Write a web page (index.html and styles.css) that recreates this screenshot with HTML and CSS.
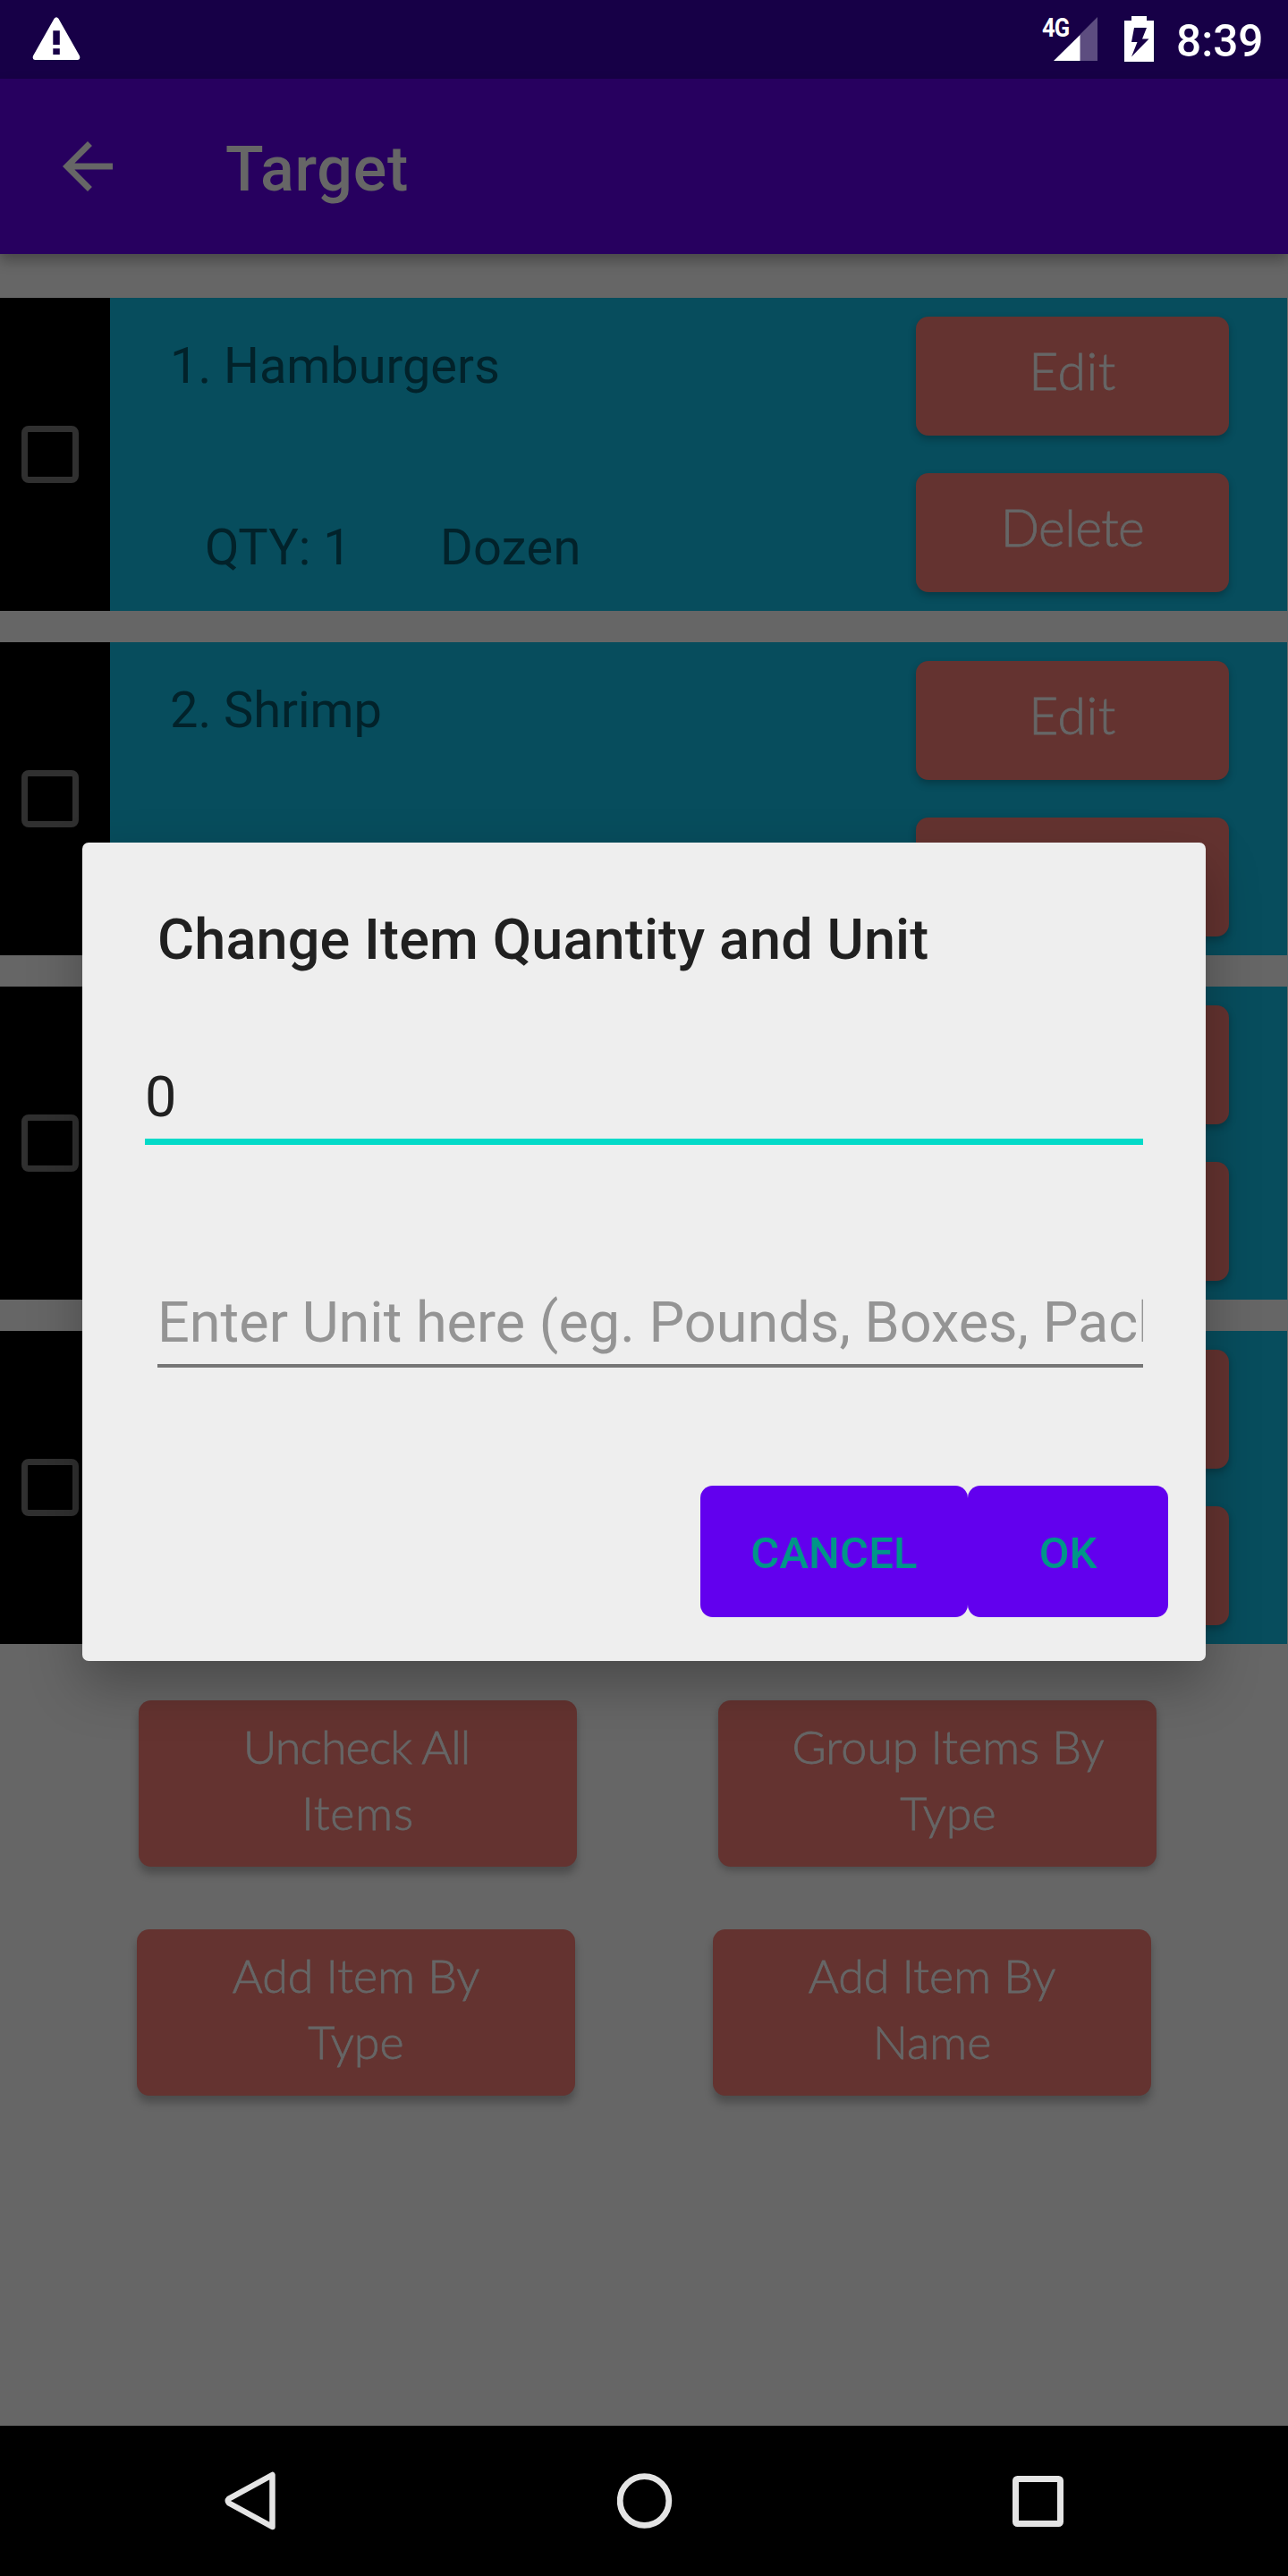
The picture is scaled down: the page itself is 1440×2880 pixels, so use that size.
FILE: index.html
```html
<!DOCTYPE html>
<html lang="en">
<head>
<meta charset="utf-8">
<title>Target</title>
<link rel="stylesheet" href="styles.css">
</head>
<body>
<div class="screen">
  <header class="status-bar">
    <svg class="warning" width="54" height="48" viewBox="0 0 54 48"><path fill="#fff" fill-rule="evenodd" d="M24.6 1.8Q27-1.2 29.4 1.8L53 43.5Q54.200 47.700 51 48H3Q-.2 47.700 1 43.500ZM23.300 15.300V31h7.500V15.300ZM23.300 35.300V42h7.500V35.300Z"/></svg>
    <div class="status-icons">
      <span class="network">4G</span>
      <svg class="signal" width="50" height="50" viewBox="0 0 50 50"><path fill="#5d4d80" d="M49 0V49H29V20Z"/><path fill="#fff" d="M0 49 29.500 20V49Z"/></svg>
      <svg class="battery" width="33" height="51" viewBox="0 0 33 51"><path fill="#fff" fill-rule="evenodd" d="M8 0H25V5H33V51H0V5H8ZM11 13 8 29H14.500L8 45.500 27.500 25.500H20L25 13Z"/></svg>
      <span class="clock">8:39</span>
    </div>
  </header>
  <div class="app-bar">
    <svg width="84" height="84" viewBox="0 0 24 24"><path fill="#666" d="M20 11H7.830l5.590-5.590L12 4l-8 8 8 8 1.410-1.410L7.830 13H20z"/></svg>
    <h1>Target</h1>
  </div>
  <main class="content">
    <section class="items">
      <article class="item">
        <div class="check-cell"><span class="checkbox"></span></div>
        <div class="details"><div class="name">1. Hamburgers</div><div class="amount"><span class="qty">QTY: 1</span><span class="measure">Dozen</span></div></div>
        <div class="actions"><div class="button small"><span class="edit">Edit</span></div><div class="button small"><span class="delete">Delete</span></div></div>
      </article>
      <article class="item">
        <div class="check-cell"><span class="checkbox"></span></div>
        <div class="details"><div class="name">2. Shrimp</div></div>
        <div class="actions"><div class="button small"><span class="edit">Edit</span></div><div class="button small"></div></div>
      </article>
      <article class="item">
        <div class="check-cell"><span class="checkbox"></span></div>
        <div class="details"></div>
        <div class="actions"><div class="button small"></div><div class="button small"></div></div>
      </article>
      <article class="item">
        <div class="check-cell"><span class="checkbox"></span></div>
        <div class="details"></div>
        <div class="actions"><div class="button small"></div><div class="button small"></div></div>
      </article>
    </section>
    <section class="list-actions">
      <div class="action-row upper">
        <div class="button large raised"><span class="uncheck">Uncheck All</span><span class="items-word">Items</span></div>
        <div class="button large group"><span>Group Items By</span><span>Type</span></div>
      </div>
      <div class="action-row lower">
        <div class="button large raised"><span>Add Item By</span><span>Type</span></div>
        <div class="button large raised"><span>Add Item By</span><span>Name</span></div>
      </div>
    </section>
  </main>
  <nav class="nav-bar">
    <svg width="58" height="68" viewBox="0 0 58 68"><path fill="none" stroke="#e4e4e4" stroke-width="6.500" stroke-linejoin="round" d="M53.500 5V63L5 36.500Q2.500 34 5 31.500Z"/></svg>
    <svg width="62" height="62" viewBox="0 0 62 62"><circle cx="30.500" cy="31" r="27.300" fill="none" stroke="#e4e4e4" stroke-width="6.800"/></svg>
    <svg width="57" height="57" viewBox="0 0 57 57"><rect x="3.500" y="3.500" width="50" height="50" rx="2" fill="none" stroke="#e4e4e4" stroke-width="7"/></svg>
  </nav>
  <div class="dialog">
    <h2>Change Item Quantity and Unit</h2>
    <div class="field quantity">0</div>
    <div class="field unit">Enter Unit here (eg. Pounds, Boxes, Packs)</div>
    <div class="dialog-actions"><div class="dialog-button cancel">CANCEL</div><div class="dialog-button ok">OK</div></div>
  </div>
</div>
</body>
</html>
```

FILE: styles.css
```css
* { box-sizing: border-box; }
body { margin: 0; background: #666; font-family: Roboto, sans-serif; }
svg { display: block; flex: none; }
h1, h2 { margin: 0; font-weight: 500; white-space: nowrap; }

.screen { position: relative; width: 1440px; height: 2880px; overflow: hidden; display: flex; flex-direction: column; background: #666; }

.status-bar { flex: none; height: 88px; padding: 0 30px 0 36px; display: flex; justify-content: space-between; background: #170047; color: #fff; }
.warning { margin-top: 19px; }
.status-icons { display: flex; align-items: flex-start; }
.network { width: 13px; margin-top: 13px; font: 700 30px/36px Roboto, sans-serif; letter-spacing: -1px; white-space: nowrap; transform: scaleX(.85); transform-origin: left; }
.signal { margin-top: 19px; }
.battery { margin: 18px 25px 0 29px; }
.clock { width: 95px; margin-top: 18px; font-size: 49.5px; font-weight: 500; line-height: 56px; white-space: nowrap; }

.app-bar { flex: none; height: 196px; padding: 0 56px; display: flex; align-items: center; gap: 112px; background: #27005f; color: #666; box-shadow: 0 7px 14px rgba(0,0,0,.3); }
.app-bar h1 { font-size: 70px; line-height: 84px; margin-top: 6px; letter-spacing: .8px; }

.content { flex: 1; padding-top: 49px; }
.items { display: flex; flex-direction: column; gap: 35px; padding-right: 1px; }
.item { height: 350px; display: flex; background: #074d5d; }
.check-cell { width: 123px; padding: 143px 0 0 24px; background: #000; }
.checkbox { display: block; width: 64px; height: 64px; border: 7px solid #303030; border-radius: 8px; }
.details { flex: 1; padding: 43px 0 0 67px; color: #02222a; font-size: 56px; line-height: 66px; }
.name { letter-spacing: -.05px; }
.amount { display: flex; margin-top: 137px; padding-left: 39px; }
.qty { width: 263px; }
.measure { letter-spacing: .3px; }
.actions { width: 415px; padding-top: 21px; display: flex; flex-direction: column; gap: 42px; }

.button { border-radius: 14px; background: #643330; color: #666; font-family: "Coming Soon", Lato, sans-serif; font-weight: 300; -webkit-text-stroke: .8px #666; box-shadow: 0 4px 8px rgba(0,0,0,.25); display: flex; flex-direction: column; align-items: center; white-space: nowrap; }
.small { width: 350px; height: 133px; padding-top: 24px; font-size: 57px; line-height: 72px; }
.edit { letter-spacing: .6px; }
.delete { letter-spacing: -.6px; }
.large { width: 490px; height: 186px; padding-top: 14px; font-size: 52px; line-height: 74px; }
.uncheck { letter-spacing: -1px; margin-right: 3px; }
.items-word { letter-spacing: .8px; }
.raised { box-shadow: 0 8px 10px rgba(0,0,0,.25); }
.group { padding-left: 24px; }

.list-actions { display: flex; flex-direction: column; gap: 70px; padding-top: 63px; }
.action-row { display: flex; }
.upper { padding-left: 155px; gap: 158px; }
.lower { padding-left: 153px; gap: 154px; }

.nav-bar { flex: none; height: 168px; padding: 0 251px; display: flex; align-items: center; justify-content: space-between; background: #000; }

.dialog { position: absolute; left: 92px; top: 942px; width: 1256px; height: 915px; padding: 71px 42px 0 70px; border-radius: 7px; background: #eee; color: #202020; box-shadow: 0 26px 60px rgba(0,0,0,.28); }
.dialog h2 { padding-left: 14px; font-size: 63px; line-height: 76px; letter-spacing: .12px; }
.field { margin-right: 28px; font-size: 63px; line-height: 76px; white-space: nowrap; overflow: hidden; }
.quantity { margin-top: 100px; height: 91px; border-bottom: 7px solid #03dac8; }
.unit { margin: 161px 28px 0 14px; height: 88px; border-bottom: 4px solid #757575; color: #949494; letter-spacing: .01px; }
.dialog-actions { display: flex; justify-content: flex-end; margin-top: 132px; }
.dialog-button { height: 147px; padding-top: 2px; border-radius: 14px; background: #6200ee; color: #009688; font-size: 49px; font-weight: 500; line-height: 147px; text-align: center; }
.cancel { width: 299px; letter-spacing: .2px; }
.ok { width: 224px; }
```
